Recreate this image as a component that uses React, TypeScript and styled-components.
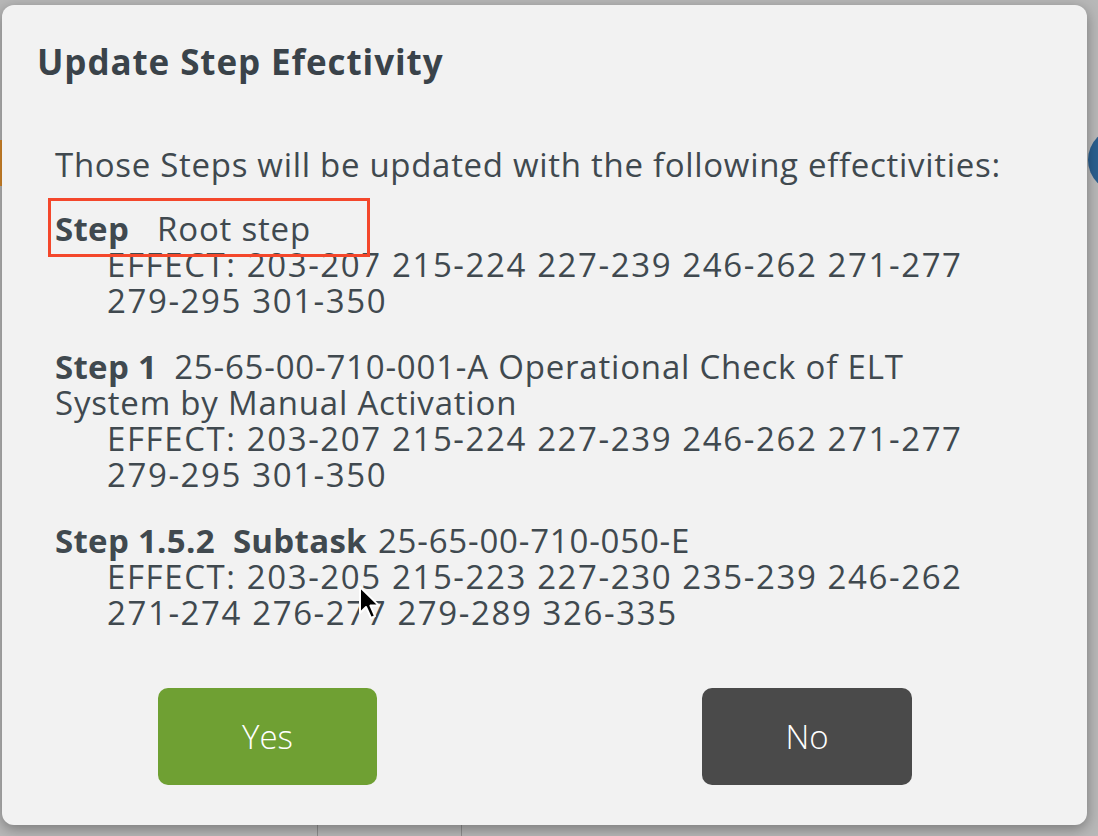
import React from 'react'
import styled, {createGlobalStyle} from 'styled-components'

const GlobalStyle = createGlobalStyle`
  html, body {
    margin: 0;
    padding: 0;
    width: 1098px;
    height: 836px;
    overflow: hidden;
    background: #b4b4b4;
    font-family: 'Open Sans', 'Liberation Sans', sans-serif;
  }
`

const Page = styled.div`
  position: relative;
  width: 1098px;
  height: 836px;
  background: #b8b8b8;
`

// bits of the app that peek out behind the modal
const OrangeTab = styled.div`
  position: absolute;
  left: 0;
  top: 140px;
  width: 4px;
  height: 46px;
  background: #d98a2b;
`

const BlueDot = styled.div`
  position: absolute;
  left: 1088px;
  top: 128px;
  width: 64px;
  height: 64px;
  border-radius: 50%;
  background: #2b5f8f;
`

const GridLine = styled.div<{$x: number}>`
  position: absolute;
  left: ${(p) => p.$x}px;
  top: 800px;
  width: 1px;
  height: 36px;
  background: #8f8f8f;
`

const Modal = styled.div`
  position: absolute;
  left: 2px;
  top: 5px;
  width: 1085px;
  height: 820px;
  box-sizing: border-box;
  background: #f2f2f2;
  border-radius: 12px;
  box-shadow: 0 4px 14px rgba(0, 0, 0, 0.35);
  display: flex;
  flex-direction: column;
  color: #40494f;
`

const Header = styled.div`
  padding: 36px 35px 0 35px;
`

const Title = styled.h2`
  margin: 0;
  font-size: 35px;
  line-height: 42px;
  letter-spacing: 0.9px;
  font-weight: 700;
  color: #3a434a;
`

const Body = styled.div`
  padding: 64px 40px 0 53px;
  display: flex;
  flex-direction: column;
  font-size: 33px;
  letter-spacing: 0.7px;
  line-height: 36px;
`

const Intro = styled.div`
  white-space: nowrap;
  margin-bottom: 28px;
`

const Group = styled.div`
  margin-bottom: 30px;
`

const Line = styled.div<{$effect?: boolean}>`
  white-space: nowrap;
  padding-left: ${(p) => (p.$effect ? '52px' : '0')};
  letter-spacing: ${(p) => (p.$effect ? '1.6px' : '0.8px')};
`

const Label = styled.b<{$gap: number}>`
  font-weight: 700;
  letter-spacing: 0.3px;
  margin-right: ${(p) => p.$gap}px;
`

const Highlight = styled.span`
  position: relative;
  display: inline-block;
  &::after {
    content: '';
    position: absolute;
    left: -7px;
    top: -13px;
    width: 322px;
    height: 59px;
    box-sizing: border-box;
    border: 3px solid #f4472b;
  }
`

const Footer = styled.div`
  margin-top: auto;
  padding: 0 0 40px 0;
  display: flex;
`

const Button = styled.button<{$tone: 'yes' | 'no'; $left: number; $width: number}>`
  margin-left: ${(p) => p.$left}px;
  width: ${(p) => p.$width}px;
  height: 97px;
  border: none;
  border-radius: 10px;
  background: ${(p) => (p.$tone === 'yes' ? '#6fa033' : '#4a4a4a')};
  color: #ffffff;
  font-family: 'Open Sans', 'Liberation Sans', sans-serif;
  font-size: 33px;
  font-weight: 300;
  cursor: pointer;
`

const Cursor = styled.svg`
  position: absolute;
  left: 358px;
  top: 585px;
`

const steps = [
  {
    head: (
      <Highlight>
        <Label $gap={28}>Step</Label>Root step
      </Highlight>
    ),
    extra: [] as string[],
    effect: ['EFFECT: 203-207 215-224 227-239 246-262 271-277', '279-295 301-350'],
  },
  {
    head: (
      <>
        <Label $gap={17}>Step 1</Label>25-65-00-710-001-A Operational Check of ELT
      </>
    ),
    extra: ['System by Manual Activation'],
    effect: ['EFFECT: 203-207 215-224 227-239 246-262 271-277', '279-295 301-350'],
  },
  {
    head: (
      <>
        <Label $gap={18}>Step 1.5.2</Label>
        <Label $gap={11}>Subtask</Label>25-65-00-710-050-E
      </>
    ),
    extra: [],
    effect: [
      'EFFECT: 203-205 215-223 227-230 235-239 246-262',
      '271-274 276-277 279-289 326-335',
    ],
  },
]

export default function App() {
  return (
    <Page>
      <GlobalStyle />
      <OrangeTab />
      <BlueDot />
      <GridLine $x={317} />
      <GridLine $x={461} />
      <Modal>
        <Header>
          <Title>Update Step Efectivity</Title>
        </Header>
        <Body>
          <Intro>Those Steps will be updated with the following effectivities:</Intro>
          {steps.map((s, i) => (
            <Group key={i}>
              <Line>{s.head}</Line>
              {s.extra.map((t) => (
                <Line key={t}>{t}</Line>
              ))}
              {s.effect.map((t) => (
                <Line $effect key={t}>
                  {t}
                </Line>
              ))}
            </Group>
          ))}
        </Body>
        <Footer>
          <Button $tone='yes' $left={156} $width={219}>
            Yes
          </Button>
          <Button $tone='no' $left={325} $width={210}>
            No
          </Button>
        </Footer>
      </Modal>
      <Cursor width='24' height='36' viewBox='0 0 12 18'>
        <path
          d='M1 1 L1 14 L4 11 L6.5 16.5 L8.5 15.6 L6.2 10.3 L10.5 10.3 Z'
          fill='#000'
          stroke='#fff'
          strokeWidth='1'
          strokeLinejoin='round'
        />
      </Cursor>
    </Page>
  )
}
